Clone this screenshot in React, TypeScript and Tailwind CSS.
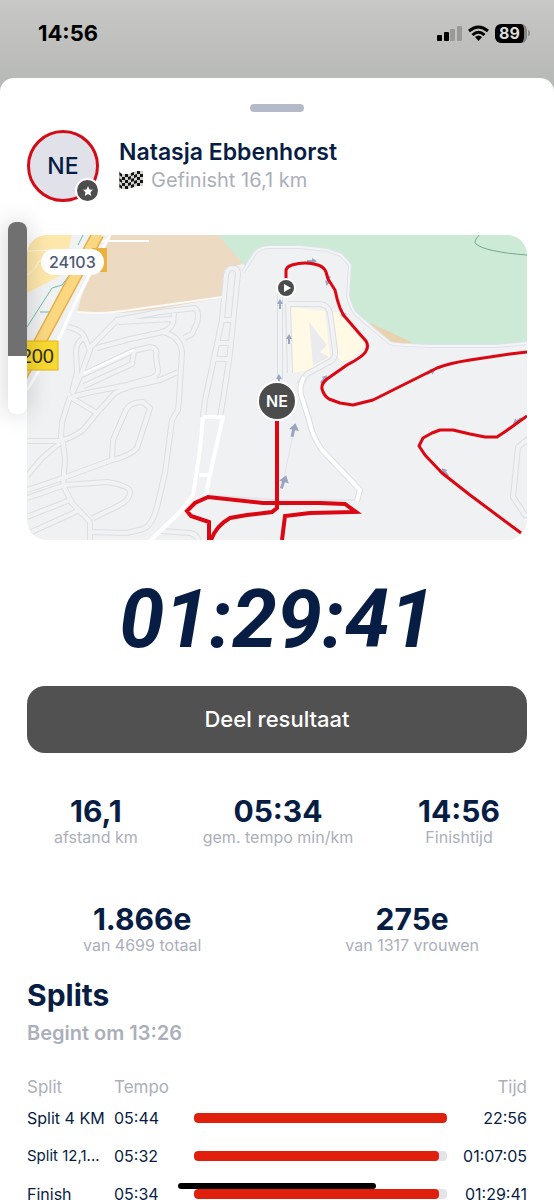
import { clsx } from 'clsx';

const stats = [
  { value: '16,1', label: 'afstand km' },
  { value: '05:34', label: 'gem. tempo min/km' },
  { value: '14:56', label: 'Finishtijd' },
];

const rankings = [
  { value: '1.866e', label: 'van 4699 totaal' },
  { value: '275e', label: 'van 1317 vrouwen' },
];

const splits = [
  { name: 'Split 4 KM', pace: '05:44', time: '22:56', percent: 100 },
  { name: 'Split 12,1...', pace: '05:32', time: '01:07:05', percent: 97, small: true },
  { name: 'Finish', pace: '05:34', time: '01:29:41', percent: 97 },
];

// Footpaths and side roads, drawn twice: grey casing first, lighter fill on top
const paths = [
  'M205 400L213 363L222 320L226 275Q228 268 232 268Q238 268 238 274L230 353L223 400L220 417',
  'M205 400L203 417',
  'M220 320H232M216 343H229M214 359H228',
  'M97 348L130 339L163 332Q180 336 182 352L179 400L178 410L172 420L165 473L157 507Q152 526 143 529L127 533L90 532',
  'M88 350L117 320L160 312L195 308Q200 312 197 323L192 334L184 338',
  'M118 322L172 319M174 313L173 323Q170 331 160 332',
  'M68 327Q80 329 84 336L90 350L82 372L72 394',
  'M84 338Q76 342 76 352L77 372L72 392',
  'M82 375L133 351L150 347Q158 348 156 356L158 372Q156 378 148 379L127 385L87 393L72 397',
  'M134 351L132 364L84 386',
  'M70 397L97 413L115 393Q128 386 142 384L160 380L178 372',
  'M97 413L83 430Q72 438 63 440',
  'M70 397L62 422L61 437L63 441H27',
  'M112 460L113 440L126 410Q130 402 143 402L150 408L137 448Q130 456 112 460L63 478L27 490',
  'M63 442L65 460L63 485L72 503L90 522V540',
  'M60 443L42 458L27 476',
  'M63 485L108 482Q130 486 130 492Q130 500 118 506L93 518',
  'M27 498L62 486M27 517L70 500M27 534L80 510',
  'M160 531L190 533Q198 535 199 542',
  'M280 380V283M288 304L290 373',
  'M288 304L320 304Q328 305 330 313L335 350Q336 358 331 361L307 374L299 385',
  'M532 436L518 447L513 497L525 515H532',
];

const arrows = [
  { x: 280, y: 304, angle: 0 },
  { x: 289, y: 339, angle: 0 },
  { x: 279, y: 379, angle: 0 },
  { x: 294, y: 430, angle: 12, big: true },
  { x: 284, y: 482, angle: 18, big: true },
  { x: 312, y: 261, angle: 90 },
  { x: 328, y: 281, angle: 200 },
  { x: 343, y: 314, angle: 160 },
  { x: 324, y: 379, angle: 40 },
  { x: 431, y: 372, angle: 60 },
  { x: 517, y: 421, angle: 235 },
  { x: 445, y: 472, angle: 320 },
];

function CourseMap() {
  return (
    <svg viewBox="27 235 500 305" className="block h-auto w-full" aria-label="Parcours" role="img">
      <rect x="27" y="235" width="500" height="305" fill="#eff1f3" />

      {/* Land use */}
      <path d="M27 235H72L62 275L27 293Z" fill="#fde7ab" />
      <path d="M27 251L56 250M27 275Q36 270 38 262L60 250" stroke="#fff7e0" fill="none" />
      <path d="M108 235H220L245 263L224 270L222 298L180 305Q140 313 110 313L77 312L82 295Z" fill="#ecdac2" />
      <path d="M218 235H527V343L497 345H430L390 343L370 327L353 312Q346 302 348 290L350 265L340 255L327 251L300 248H268Q258 248 253 255L245 266L233 252Z" fill="#cdead7" />
      <path d="M368 322Q390 332 413 343H388Z" fill="#e8d2b0" />
      <path d="M288 307L325 311L330 357L310 370L293 373Z" fill="#fff9e6" />
      <path d="M332 312L342 313L365 344L356 357L342 362L336 354Z" fill="#fff9e6" />
      <path d="M309 322L327 345L320 352L329 357L313 366Z" fill="#e9ebef" />
      <path d="M479 235Q473 242 476 244Q486 252 527 255" fill="none" stroke="#74a892" />
      <path d="M83 235L78 245M68 277L62 285L52 288L27 327M40 312H51" fill="none" stroke="#74bd9f" />

      {/* Roads */}
      <g fill="none" strokeLinejoin="round">
        {paths.map((d) => (
          <path key={d} d={d} stroke="#dcdee1" strokeWidth="6" />
        ))}
        {paths.map((d) => (
          <path key={d} d={d} stroke="#f1f2f4" strokeWidth="4" />
        ))}
        <path d="M77 312Q100 314 115 312Q145 308 180 303L222 297" stroke="#fafafa" strokeWidth="2" />
        <path d="M243 272L255 253Q260 247 270 247H300L327 250L341 255L350 265L348 295Q350 307 356 314L372 328L390 343Q395 345 430 346L497 346L527 343" stroke="#dfe2e8" strokeWidth="4" />
        <path d="M243 272L255 253Q260 247 270 247H300L327 250L341 255L350 265L348 295Q350 307 356 314L372 328L390 343Q395 345 430 346L497 346L527 343" stroke="#f3f4f6" strokeWidth="2" />
        <path d="M203 417L200 450L193 495L180 512L150 541M203 417H223L210 474L206 496M199 475H211" stroke="#fff" strokeWidth="4" />
        <path d="M304 377Q298 388 302 398L309 420Q312 436 322 450L360 490L357 501" stroke="#dcdee1" strokeWidth="6" />
        <path d="M357 500H280L208 495" stroke="#dcdee1" />
        <path d="M304 377Q298 388 302 398L309 420Q312 436 322 450L360 490L357 501" stroke="#fff" strokeWidth="4" />
        <path d="M84 373L134 350" stroke="#fff" strokeWidth="2" />
        <path d="M98 241H149" stroke="#fff" strokeWidth="2" />
        <path d="M110 235L75 303L60 337L27 390" stroke="#fff" strokeWidth="3" />
        <path d="M284 520V540M283 482L294 430" stroke="#e2e4e9" />
        <path d="M98 234L41 340L18 382" stroke="#e6b04a" strokeWidth="13" />
        <path d="M98 234L41 340L18 382" stroke="#fad780" strokeWidth="10" />
      </g>
      <rect x="92" y="248" width="15" height="24" fill="#edb13f" />
      <rect x="12" y="341" width="46" height="29" fill="#f9d82f" stroke="#e2b51c" />
      <text x="54" y="363" textAnchor="end" fontSize="20" fill="#33301d" className="font-['Liberation_Sans',sans-serif]">
        200
      </text>

      {/* Direction arrows */}
      {arrows.map((a) => (
        <path
          key={`${a.x}-${a.y}`}
          d={a.big ? 'M0 -7L5 0H1L1 7H-2V0H-5Z' : 'M0 -5L3 0H1V5H-1V0H-3Z'}
          transform={`translate(${a.x} ${a.y}) rotate(${a.angle})`}
          fill="#9ca5c0"
        />
      ))}

      {/* Route */}
      <g fill="none" stroke="#db0712" strokeLinejoin="round">
        <path d="M286 280V271Q286 267 292 265Q305 261 318 265Q324 267 326 272L328 279L335 290Q337 300 340 308Q343 315 346 318L358 332L366 341Q369 346 366 351Q364 356 347 365L327 379Q321 384 322 389Q324 396 329 399L340 403L353 405L373 400L413 380L437 368Q450 363 470 360L510 354L527 352" strokeWidth="3" />
        <path d="M527 416L506 431L497 437H485L470 434L453 430H440L432 433L423 438L419 446L425 455L442 473L470 495L521 533" strokeWidth="3" />
        <path d="M277 420V508L272 512L247 515L230 518Q216 526 211 540M209 540V522L191 516L187 511L195 503L208 497L263 503H320L345 504L356 512L310 513L285 516L282 540" strokeWidth="4" strokeLinejoin="miter" />
      </g>
      <circle cx="286" cy="288" r="10" fill="#fff" />
      <circle cx="286" cy="288" r="8" fill="#4c4c4c" />
      <path d="M284 284V292L291 288Z" fill="#fff" />

      {/* Runner marker */}
      <circle cx="277" cy="401" r="20" fill="#fff" />
      <circle cx="277" cy="401" r="18" fill="#4c4c4c" />
      <text x="277" y="407" textAnchor="middle" fontSize="16" fontWeight="600" fill="#fff" className="font-['Inter',sans-serif]">
        NE
      </text>
    </svg>
  );
}

function CheckeredFlag() {
  const wave = [0, 2, 2, 2, 1, 0, -1, -1, -1];
  const cells = [];
  for (let col = 0; col < 8; col++) {
    for (let row = 0; row < 5; row++) {
      if ((col + row) % 2) continue;
      const x = col * 3;
      const y = row * 3 + 2;
      cells.push(
        <path
          key={`${col}-${row}`}
          d={`M${x} ${y + wave[col]}L${x + 3} ${y + wave[col + 1]}V${y + 3 + wave[col + 1]}L${x} ${y + 3 + wave[col]}Z`}
          fill="#151515"
        />,
      );
    }
  }
  return (
    <svg viewBox="0 0 24 20" className="h-5 w-6" aria-hidden="true">
      <path d="M0 2L3 4H9L12 3L18 1H24V16H18L12 18L9 19H3L0 17Z" fill="#d2d2cd" />
      {cells}
      <path d="M0 1V20" stroke="#999" />
    </svg>
  );
}

function StatusBar() {
  return (
    <header className="flex h-[78px] shrink-0 items-start justify-between pt-[21px] pr-6 pl-[38px] text-black">
      <span className="text-[22px] leading-6 font-bold">14:56</span>
      <div className="flex h-6 items-center gap-1.5">
        <svg viewBox="0 0 25 17" className="h-[17px] w-[25px]" aria-hidden="true">
          <rect x="0" y="10" width="5" height="6" rx="1" />
          <rect x="7" y="7" width="5" height="9" rx="1" />
          <rect x="13" y="4" width="5" height="12" rx="1" fill="#999a98" />
          <rect x="20" y="1" width="5" height="15" rx="1" fill="#999a98" />
        </svg>
        <svg viewBox="0 0 21 17" className="h-[17px] w-[21px]" fill="none" stroke="#000" strokeWidth="3" aria-hidden="true">
          <path d="M1 6Q10.500 -2 20 6" />
          <path d="M4.500 10Q10.500 4.500 16.500 10" />
          <path d="M7 12Q10.500 9 14 12L10.500 16Z" fill="#000" stroke="none" />
        </svg>
        <div className="flex items-center gap-px">
          <span className="flex h-[19px] w-8 items-center justify-center rounded-md border-r-3 border-[#858684] bg-black text-base leading-none font-bold text-[#dcdcda]">
            89
          </span>
          <span className="h-1.5 w-0.5 rounded-r bg-[#8f908e]" />
        </div>
      </div>
    </header>
  );
}

function StatItem({ value, label }: { value: string; label: string }) {
  return (
    <div className="flex flex-col items-center">
      <dd className="text-[30px] leading-8 font-bold">{value}</dd>
      <dt className="order-last text-base leading-5 text-[#abafba]">{label}</dt>
    </div>
  );
}

export default function App() {
  return (
    <div className="relative flex h-screen flex-col overflow-hidden bg-gradient-to-b from-[#c8c8c6] to-[#b8bab7] to-[78px] font-['Inter','Liberation_Sans',sans-serif] text-[#071d43]">
      <StatusBar />

      <main className="flex-1 rounded-t-[14px] bg-white px-[27px] pt-[26px]">
        <div className="mx-auto h-2 w-[54px] rounded-full bg-[#b5bac8]" />

        {/* Runner */}
        <section className="mt-[18px] flex items-center gap-5">
          <div className="relative flex size-[72px] shrink-0 items-center justify-center rounded-full border-3 border-[#d30b17] bg-[#e1e2e9] text-[23px] font-medium">
            NE
            <span className="absolute -right-1 -bottom-1 flex size-[25px] items-center justify-center rounded-full border-2 border-white bg-[#4d4d4d]">
              <svg viewBox="0 0 24 24" className="size-3" fill="#fff" aria-hidden="true">
                <path d="M12 2L15 9L22 9.500L17 14.500L18.500 22L12 18L5.500 22L7 14.500L2 9.500L9 9Z" />
              </svg>
            </span>
          </div>
          <div>
            <h1 className="text-[23px] leading-7 font-semibold">Natasja Ebbenhorst</h1>
            <p className="flex items-center gap-2 text-xl leading-7 text-[#abafba]">
              <CheckeredFlag />
              Gefinisht 16,1 km
            </p>
          </div>
        </section>

        <section className="relative mt-[33px]">
          <div className="overflow-hidden rounded-[20px]">
            <CourseMap />
          </div>
          <span className="absolute top-3.5 left-3.5 rounded-full bg-white px-2 text-base leading-[26px] font-medium text-[#4c5a75]">
            24103
          </span>
        </section>

        <p className="mt-10 text-center font-['Roboto',sans-serif] text-[81px] leading-[80px] font-bold italic">
          01:29:41
        </p>

        <button type="button" className="mt-[26px] h-[67px] w-full rounded-[18px] bg-[#515151] text-[22px] font-medium text-white">
          Deel resultaat
        </button>

        <dl className="mt-[42px] flex justify-between px-[27px]">
          {stats.map((s) => (
            <StatItem key={s.label} {...s} />
          ))}
        </dl>
        <dl className="mt-14 flex justify-between pr-12 pl-14">
          {rankings.map((s) => (
            <StatItem key={s.label} {...s} />
          ))}
        </dl>

        {/* Splits */}
        <h2 className="mt-[22px] text-[30px] leading-9 font-bold">Splits</h2>
        <p className="mt-2 text-xl leading-6 font-semibold text-[#abafba]">Begint om 13:26</p>

        <table className="mt-[30px] w-full table-fixed text-base">
          <thead>
            <tr className="h-6 text-left text-[17px] leading-6 text-[#abafba]">
              <th className="w-[87px] p-0 font-normal">Split</th>
              <th className="w-20 p-0 font-normal">Tempo</th>
              <th className="p-0" aria-label="Verhouding" />
              <th className="w-20 p-0 text-right font-normal">Tijd</th>
            </tr>
          </thead>
          <tbody>
            {splits.map((split) => (
              <tr key={split.name} className="h-[38px]">
                <td className={clsx('p-0 whitespace-nowrap', split.small && 'text-[15px]')}>{split.name}</td>
                <td className="p-0">{split.pace}</td>
                <td className="p-0">
                  <div className="h-2.5 overflow-hidden rounded bg-[#e3e4e9]">
                    <div className="h-full rounded bg-[#e01f0c]" style={{ width: `${split.percent}%` }} />
                  </div>
                </td>
                <td className="p-0 text-right">{split.time}</td>
              </tr>
            ))}
          </tbody>
        </table>
      </main>

      {/* Volume overlay */}
      <div className="absolute top-[222px] left-2 h-48 w-[19px] overflow-hidden rounded-lg bg-white shadow-[0_0_24px_rgba(0,0,0,0.2)]">
        <div className="h-[70%] bg-[#707070]" />
      </div>

      {/* Home indicator */}
      <div className="absolute bottom-[11px] left-1/2 h-1.5 w-[198px] -translate-x-1/2 rounded-full bg-black" />
    </div>
  );
}
